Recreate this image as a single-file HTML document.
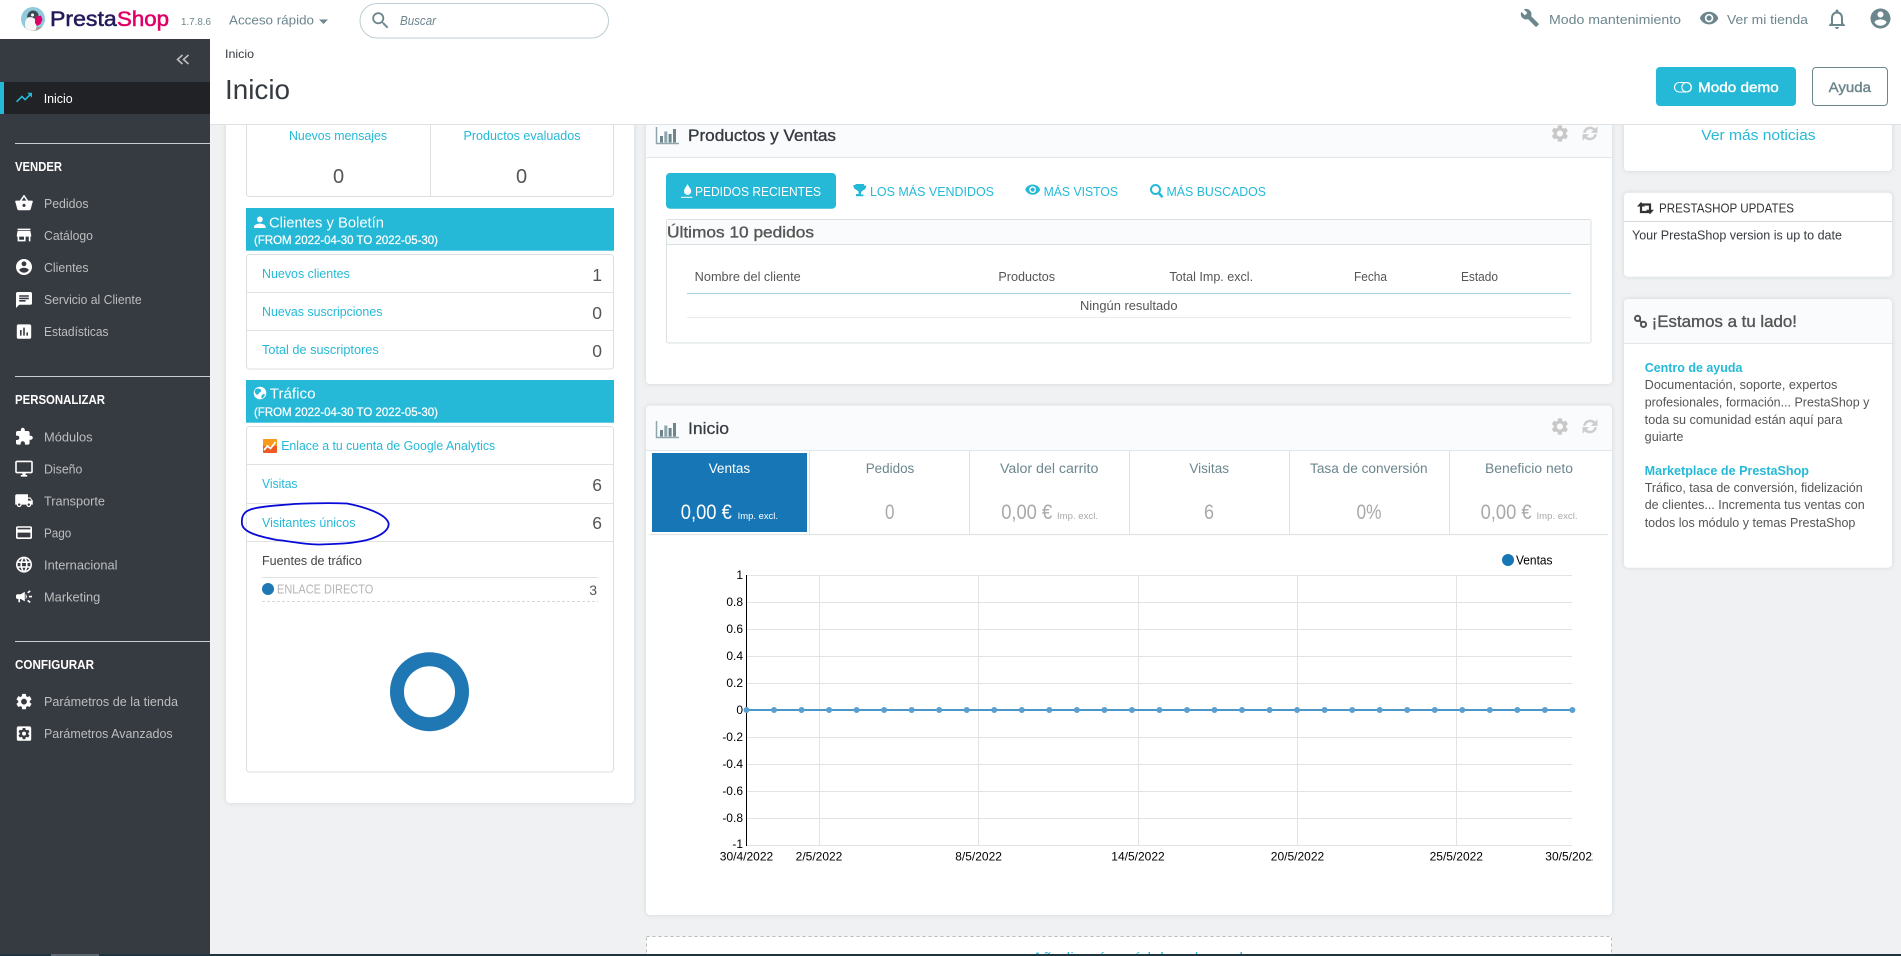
<!DOCTYPE html>
<html lang="es"><head><meta charset="utf-8"><title>PrestaShop - Inicio</title>
<style>
html,body{margin:0;padding:0;background:#eff1f2;width:1901px;height:956px;overflow:hidden}
svg{display:block}
text{font-family:"Liberation Sans",Arial,sans-serif;white-space:pre}
.s{font-size:13px;fill:#bebebe}
.h{font-size:12.5px;font-weight:bold;fill:#fff}
.c{font-size:12.5px;fill:#25b9d7}
.g{font-size:13px;fill:#6c868e}
.v{font-size:17.5px;fill:#555}
.t{font-size:12.5px;fill:#555}
.k{font-size:13.5px;fill:#6c868e}
.b{font-size:21px;fill:#a9a9a9}
.m{font-size:9.5px;fill:#a9a9a9}
.x{font-size:12px;fill:#000}
.card{filter:drop-shadow(0 0 2px rgba(120,140,150,.25))}
.ln{stroke:#dfe1e3;stroke-width:1}
.gr{stroke:#e3e3e3;stroke-width:1}
</style></head><body>
<svg xmlns="http://www.w3.org/2000/svg" width="1901" height="956" viewBox="0 0 1901 956">
<defs>
<path id="basket" d="M17.21 9l-4.38-6.56c-.19-.28-.51-.42-.83-.42-.32 0-.64.14-.83.43L6.79 9H2c-.55 0-1 .45-1 1 0 .09.01.18.04.27l2.54 9.27c.23.84 1 1.46 1.92 1.46h13c.92 0 1.69-.62 1.93-1.46l2.54-9.27L23 10c0-.55-.45-1-1-1h-4.79zM9 9l3-4.4L15 9H9zm3 8c-1.1 0-2-.9-2-2s.9-2 2-2 2 .9 2 2-.9 2-2 2z"/>
<path id="store" d="M20 4H4v2h16V4zm1 10v-2l-1-5H4l-1 5v2h1v6h10v-6h4v6h2v-6h1zm-9 4H6v-4h6v4z"/>
<path id="acct" d="M12 2C6.48 2 2 6.48 2 12s4.48 10 10 10 10-4.48 10-10S17.52 2 12 2zm0 3c1.66 0 3 1.34 3 3s-1.34 3-3 3-3-1.34-3-3 1.34-3 3-3zm0 14.2c-2.5 0-4.71-1.28-6-3.22.03-1.99 4-3.08 6-3.08 1.99 0 5.97 1.09 6 3.08-1.29 1.94-3.5 3.22-6 3.22z"/>
<path id="chat" d="M20 2H4c-1.1 0-1.99.9-1.99 2L2 22l4-4h14c1.1 0 2-.9 2-2V4c0-1.1-.9-2-2-2zM6 9h12v2H6V9zm8 5H6v-2h8v2zm4-6H6V6h12v2z"/>
<path id="assess" d="M19 3H5c-1.1 0-2 .9-2 2v14c0 1.1.9 2 2 2h14c1.1 0 2-.9 2-2V5c0-1.1-.9-2-2-2zM9 17H7v-7h2v7zm4 0h-2V7h2v10zm4 0h-2v-4h2v4z"/>
<path id="ext" d="M20.5 11H19V7c0-1.1-.9-2-2-2h-4V3.5C13 2.12 11.88 1 10.5 1S8 2.12 8 3.5V5H4c-1.1 0-1.99.9-1.99 2v3.8H3.5c1.49 0 2.7 1.21 2.7 2.7s-1.21 2.7-2.7 2.7H2V20c0 1.1.9 2 2 2h3.8v-1.5c0-1.49 1.21-2.7 2.7-2.7 1.49 0 2.7 1.21 2.7 2.7V22H17c1.1 0 2-.9 2-2v-4h1.5c1.38 0 2.5-1.12 2.5-2.5S21.88 11 20.5 11z"/>
<path id="desk" d="M21 2H3c-1.1 0-2 .9-2 2v12c0 1.1.9 2 2 2h7v2H8v2h8v-2h-2v-2h7c1.1 0 2-.9 2-2V4c0-1.1-.9-2-2-2zm0 14H3V4h18v12z"/>
<path id="ship" d="M20 8h-3V4H3c-1.1 0-2 .9-2 2v11h2c0 1.66 1.34 3 3 3s3-1.34 3-3h6c0 1.66 1.34 3 3 3s3-1.34 3-3h2v-5l-3-4zM6 18.5c-.83 0-1.5-.67-1.5-1.5s.67-1.5 1.5-1.5 1.5.67 1.5 1.5-.67 1.5-1.5 1.5zm13.5-9l1.96 2.5H17V9.5h2.5zm-1.5 9c-.83 0-1.5-.67-1.5-1.5s.67-1.5 1.5-1.5 1.5.67 1.5 1.5-.67 1.5-1.5 1.5z"/>
<path id="card" d="M20 4H4c-1.11 0-1.99.89-1.99 2L2 18c0 1.11.89 2 2 2h16c1.11 0 2-.89 2-2V6c0-1.11-.89-2-2-2zm0 14H4v-6h16v6zm0-10H4V6h16v2z"/>
<path id="lang" d="M11.99 2C6.47 2 2 6.48 2 12s4.47 10 9.99 10C17.52 22 22 17.52 22 12S17.52 2 11.99 2zm6.93 6h-2.95c-.32-1.25-.78-2.45-1.38-3.56 1.84.63 3.37 1.91 4.33 3.56zM12 4.04c.83 1.2 1.48 2.53 1.91 3.96h-3.82c.43-1.43 1.08-2.76 1.91-3.96zM4.26 14C4.1 13.36 4 12.69 4 12s.1-1.36.26-2h3.38c-.08.66-.14 1.32-.14 2 0 .68.06 1.34.14 2H4.26zm.82 2h2.95c.32 1.25.78 2.45 1.38 3.56-1.84-.63-3.37-1.9-4.33-3.56zm2.95-8H5.08c.96-1.66 2.49-2.93 4.33-3.56C8.81 5.55 8.35 6.75 8.03 8zM12 19.96c-.83-1.2-1.48-2.53-1.91-3.96h3.82c-.43 1.43-1.08 2.76-1.91 3.96zM14.34 14H9.66c-.09-.66-.16-1.32-.16-2 0-.68.07-1.35.16-2h4.68c.09.65.16 1.32.16 2 0 .68-.07 1.34-.16 2zm.25 5.56c.6-1.11 1.06-2.31 1.38-3.56h2.95c-.96 1.65-2.49 2.93-4.33 3.56zM16.36 14c.08-.66.14-1.32.14-2 0-.68-.06-1.34-.14-2h3.38c.16.64.26 1.31.26 2s-.1 1.36-.26 2h-3.38z"/>
<path id="camp" d="M18 11v2h4v-2h-4zm-2 6.61c.96.71 2.21 1.65 3.2 2.39.4-.53.8-1.07 1.2-1.6-.99-.74-2.24-1.68-3.2-2.4-.4.54-.8 1.08-1.2 1.61zM20.4 5.6c-.4-.53-.8-1.07-1.2-1.6-.99.74-2.24 1.68-3.2 2.4.4.53.8 1.07 1.2 1.6.96-.72 2.21-1.65 3.2-2.4zM4 9c-1.1 0-2 .9-2 2v2c0 1.1.9 2 2 2h1v4h2v-4h1l5 3V6L8 9H4zm11.5 3c0-1.33-.58-2.53-1.5-3.35v6.69c.92-.81 1.5-2.01 1.5-3.34z"/>
<path id="gear" d="M19.14 12.94c.04-.3.06-.61.06-.94 0-.32-.02-.64-.07-.94l2.03-1.58c.18-.14.23-.41.12-.61l-1.92-3.32c-.12-.22-.37-.29-.59-.22l-2.39.96c-.5-.38-1.03-.7-1.62-.94l-.36-2.54c-.04-.24-.24-.41-.48-.41h-3.84c-.24 0-.43.17-.47.41l-.36 2.54c-.59.24-1.13.57-1.62.94l-2.39-.96c-.22-.08-.47 0-.59.22L2.74 8.87c-.12.21-.08.47.12.61l2.03 1.58c-.05.3-.09.63-.09.94s.02.64.07.94l-2.03 1.58c-.18.14-.23.41-.12.61l1.92 3.32c.12.22.37.29.59.22l2.39-.96c.5.38 1.03.7 1.62.94l.36 2.54c.05.24.24.41.48.41h3.84c.24 0 .44-.17.47-.41l.36-2.54c.59-.24 1.13-.56 1.62-.94l2.39.96c.22.08.47 0 .59-.22l1.92-3.32c.12-.22.07-.47-.12-.61l-2.01-1.58zM12 15.6c-1.98 0-3.6-1.62-3.6-3.6s1.62-3.6 3.6-3.6 3.6 1.62 3.6 3.6-1.62 3.6-3.6 3.6z"/>
<path id="gearbox" d="M19 3H5c-1.11 0-2 .9-2 2v14c0 1.1.89 2 2 2h14c1.11 0 2-.9 2-2V5c0-1.1-.89-2-2-2zm-1.75 9c0 .23-.02.46-.05.68l1.48 1.16c.13.11.17.3.08.45l-1.4 2.42c-.09.15-.27.21-.43.15l-1.74-.7c-.36.28-.76.51-1.18.69l-.26 1.85c-.03.17-.18.3-.35.3h-2.8c-.17 0-.32-.13-.35-.29l-.26-1.85c-.43-.18-.82-.41-1.18-.69l-1.74.7c-.16.06-.34 0-.43-.15l-1.4-2.42c-.09-.15-.05-.34.08-.45l1.48-1.16c-.03-.23-.05-.46-.05-.69 0-.23.02-.46.05-.68l-1.48-1.16c-.13-.11-.17-.3-.08-.45l1.4-2.42c.09-.15.27-.21.43-.15l1.74.7c.36-.28.76-.51 1.18-.69l.26-1.85c.03-.17.18-.3.35-.3h2.8c.17 0 .32.13.35.29l.26 1.85c.43.18.82.41 1.18.69l1.74-.7c.16-.06.34 0 .43.15l1.4 2.42c.09.15.05.34-.08.45l-1.48 1.16c.03.23.05.46.05.69z"/>
<path id="trend" d="M16 6l2.29 2.29-4.88 4.88-4-4L2 16.59 3.41 18l6-6 4 4 6.3-6.29L22 12V6z"/>
<path id="wrench" d="M22.7 19l-9.1-9.1c.9-2.3.4-5-1.5-6.9-2-2-5-2.4-7.4-1.3L9 6 6 9 1.6 4.7C.4 7.1.9 10.1 2.9 12.1c1.9 1.9 4.6 2.4 6.9 1.5l9.1 9.1c.4.4 1 .4 1.4 0l2.3-2.3c.5-.4.5-1.1.1-1.4z"/>
<path id="eye" d="M12 4.5C7 4.5 2.73 7.61 1 12c1.73 4.39 6 7.5 11 7.5s9.27-3.11 11-7.5c-1.73-4.39-6-7.5-11-7.5zM12 17c-2.76 0-5-2.24-5-5s2.24-5 5-5 5 2.24 5 5-2.24 5-5 5zm0-8c-1.66 0-3 1.34-3 3s1.34 3 3 3 3-1.34 3-3-1.34-3-3-3z"/>
<path id="bell" d="M12 22c1.1 0 2-.9 2-2h-4c0 1.1.9 2 2 2zm6-6v-5c0-3.07-1.63-5.64-4.5-6.32V4c0-.83-.67-1.5-1.5-1.5s-1.5.67-1.5 1.5v.68C7.64 5.36 6 7.92 6 11v5l-2 2v1h16v-1l-2-2zm-2 1H8v-6c0-2.48 1.51-4.5 4-4.5s4 2.02 4 4.5v6z"/>
<path id="search" d="M15.5 14h-.79l-.28-.27C15.41 12.59 16 11.11 16 9.5 16 5.91 13.09 3 9.5 3S3 5.91 3 9.5 5.91 16 9.5 16c1.61 0 3.09-.59 4.23-1.57l.27.28v.79l5 4.99L20.49 19l-4.99-5zm-6 0C7.01 14 5 11.99 5 9.5S7.01 5 9.5 5 14 7.01 14 9.5 11.99 14 9.5 14z"/>
<path id="person" d="M12 12c2.21 0 4-1.79 4-4s-1.79-4-4-4-4 1.79-4 4 1.79 4 4 4zm0 2c-2.67 0-8 1.34-8 4v2h16v-2c0-2.66-5.33-4-8-4z"/>
<g id="bars"><path d="M.5 0V16.500H23" fill="none" stroke="#8fa4ab" stroke-width="1.500"/><rect x="4" y="9" width="3" height="6.500" fill="#6c868e"/><rect x="8.300" y="4.500" width="3" height="11" fill="#8fa4ab"/><rect x="12.600" y="7" width="3" height="8.500" fill="#6c868e"/><rect x="17" y="2" width="3" height="13.500" fill="#6c868e"/></g>
<g id="ref" fill="#cdcdcd"><path d="M2.300 7.300A5.900 5.900 0 0 1 12.300 4.200" fill="none" stroke="#cdcdcd" stroke-width="2.500"/><path d="M15.500 .7V7.400H8.800z"/><path d="M13.700 8.700A5.900 5.900 0 0 1 3.700 11.800" fill="none" stroke="#cdcdcd" stroke-width="2.500"/><path d="M.5 15.300V8.600H7.200z"/></g>
<clipPath id="xclip"><rect x="1500" y="840" width="93" height="40"/></clipPath>
<clipPath id="logoclip"><circle cx="33" cy="19" r="12"/></clipPath>
</defs>

<rect width="1901" height="956" fill="#eff1f2"/>

<!-- left column card -->
<rect class="card" x="226" y="60" width="408" height="743" rx="4" fill="#fff"/>
<rect x="246.5" y="100" width="367" height="96.5" rx="3" fill="#fff" stroke="#dcdfe1"/>
<path d="M430.5 100V196" class="ln"/>
<text class="c" x="289" y="140" textLength="98" lengthAdjust="spacingAndGlyphs">Nuevos mensajes</text>
<text class="c" x="463.5" y="140" textLength="117" lengthAdjust="spacingAndGlyphs">Productos evaluados</text>
<text class="v" x="333" y="183" style="font-size:20px">0</text>
<text class="v" x="516" y="183" style="font-size:20px">0</text>

<rect x="246" y="208" width="368" height="42.7" fill="#25b9d7"/>
<use href="#person" transform="translate(251.200,213.600) scale(.72)" fill="#fff"/>
<text x="269" y="227.500" style="font-size:15px;fill:#fff" textLength="115" lengthAdjust="spacingAndGlyphs">Clientes y Boletín</text>
<text x="254" y="244" style="font-size:12px;fill:#fff;stroke:#fff;stroke-width:.25" textLength="184" lengthAdjust="spacingAndGlyphs">(FROM 2022-04-30 TO 2022-05-30)</text>

<rect x="246.5" y="254.500" width="367" height="114.500" rx="3" fill="#fff" stroke="#dcdfe1"/>
<path d="M246 292.500H614M246 330.500H614" class="ln"/>
<text class="c" x="262" y="278" textLength="87.800" lengthAdjust="spacingAndGlyphs">Nuevos clientes</text>
<text class="c" x="262" y="316" textLength="120.400" lengthAdjust="spacingAndGlyphs">Nuevas suscripciones</text>
<text class="c" x="262" y="354" textLength="116.700" lengthAdjust="spacingAndGlyphs">Total de suscriptores</text>
<text class="v" x="602" y="281" text-anchor="end">1</text>
<text class="v" x="602" y="319" text-anchor="end">0</text>
<text class="v" x="602" y="357" text-anchor="end">0</text>

<rect x="246" y="380" width="368" height="42.7" fill="#25b9d7"/>
<circle cx="260" cy="393" r="6.300" fill="#fff"/>
<path d="M256 389c2-1 4-.5 5 1s-1 2-2 3-1 3-3 1-1-4 0-5zM262 395c1-1 2-1 3-.5-.5 2-2 3.500-3.500 4 0-1.500-.5-2.500.5-3.500z" fill="#25b9d7"/>
<text x="269.800" y="398.500" style="font-size:15px;fill:#fff" textLength="45.700" lengthAdjust="spacingAndGlyphs">Tráfico</text>
<text x="254" y="416" style="font-size:12px;fill:#fff;stroke:#fff;stroke-width:.25" textLength="184" lengthAdjust="spacingAndGlyphs">(FROM 2022-04-30 TO 2022-05-30)</text>

<rect x="246.500" y="426.500" width="367" height="345.500" rx="3" fill="#fff" stroke="#dcdfe1"/>
<path d="M246 464.500H614M246 503.500H614M246 541.500H614" class="ln"/>
<rect x="263" y="439" width="14" height="14" rx="1" fill="#ef5a23"/>
<rect x="263" y="439" width="14" height="7" rx="1" fill="#f99a1c"/>
<path d="M264 450l3.500-4 3 2.500 5-6.500" fill="none" stroke="#fff" stroke-width="1.800"/>
<text class="c" x="281.200" y="450" textLength="214" lengthAdjust="spacingAndGlyphs">Enlace a tu cuenta de Google Analytics</text>
<text class="c" x="262" y="488" textLength="35.500" lengthAdjust="spacingAndGlyphs">Visitas</text>
<text class="c" x="262" y="527" textLength="93.500" lengthAdjust="spacingAndGlyphs">Visitantes únicos</text>
<text class="v" x="602" y="491" text-anchor="end">6</text>
<text class="v" x="602" y="529" text-anchor="end">6</text>
<path d="M294 504C315 503 335 503 347 503.500C365 507 386 514 388.500 523C390 531 378 537 367 540C350 544 335 544 318 544.500C300 544 290 541 277 540C262 537 243 533 242 524C241 515 245 511 252 509C265 505.500 280 505.500 294 504Z" fill="none" stroke="#0a0ad8" stroke-width="1.800"/>
<text x="262" y="565" style="font-size:12.5px;fill:#444" textLength="100" lengthAdjust="spacingAndGlyphs">Fuentes de tráfico</text>
<path d="M262 577.500H598" class="ln"/>
<circle cx="268" cy="589" r="6" fill="#1f77b4"/>
<text x="277" y="593.500" style="font-size:12.500px;fill:#b5b5b5" textLength="96.300" lengthAdjust="spacingAndGlyphs">ENLACE DIRECTO</text>
<text x="597" y="595" text-anchor="end" style="font-size:14px;fill:#555">3</text>
<path d="M262 601.500H598" stroke="#d8d8d8" stroke-dasharray="3 2" fill="none"/>
<circle cx="429.500" cy="691.700" r="32.500" fill="none" stroke="#1f77b4" stroke-width="14"/>

<!-- Productos y Ventas -->
<rect class="card" x="646" y="60" width="966" height="324" rx="4" fill="#fff"/>
<rect x="646" y="60" width="966" height="97" rx="4" fill="#fafbfc"/>
<path d="M646 157.500H1612" stroke="#dfe7ea"/>
<use href="#bars" transform="translate(656,127)"/>
<text x="688" y="141" style="font-size:16.500px;fill:#363a41;stroke:#363a41;stroke-width:.35" textLength="148" lengthAdjust="spacingAndGlyphs">Productos y Ventas</text>
<use href="#gear" transform="translate(1549.700,123.300) scale(.85)" fill="#c8c8c8"/>
<use href="#ref" transform="translate(1582,125.500)"/>

<rect x="666" y="173" width="170" height="35.700" rx="4" fill="#25b9d7"/>
<path d="M687.500 184c-.8 2.500-3.500 4.500-3.500 7.300a3.600 3.600 0 0 0 7.200 0c0-2.800-2.900-4.800-3.700-7.300z" fill="#fff"/>
<path d="M681 197.300H692.500" stroke="#fff" stroke-width="1"/>
<text x="695" y="196" style="font-size:13px;fill:#fff" textLength="126" lengthAdjust="spacingAndGlyphs">PEDIDOS RECIENTES</text>
<path d="M855.500 184h8.500v1.500h2.200c0 3-1.500 4.500-3.500 5-.5.800-1 1.300-1.700 1.500v2.500h2.500v1.700h-7.500V194h2.500v-2.500c-.7-.2-1.200-.7-1.700-1.500-2-.5-3.500-2-3.500-5h2.200z" fill="#25b9d7"/>
<text class="c" x="870" y="196" style="font-size:13px" textLength="124" lengthAdjust="spacingAndGlyphs">LOS MÁS VENDIDOS</text>
<use href="#eye" transform="translate(1024.500,181.500) scale(.68)" fill="#25b9d7"/>
<text class="c" x="1043.600" y="196" style="font-size:13px" textLength="74.400" lengthAdjust="spacingAndGlyphs">MÁS VISTOS</text>
<circle cx="1155.500" cy="189.500" r="4.500" fill="none" stroke="#25b9d7" stroke-width="2"/>
<path d="M1158.800 193l3.700 4.200" stroke="#25b9d7" stroke-width="2.500"/>
<text class="c" x="1166.500" y="196" style="font-size:13px" textLength="99.500" lengthAdjust="spacingAndGlyphs">MÁS BUSCADOS</text>

<rect x="666.500" y="219.500" width="924.500" height="123.500" rx="2" fill="#fff" stroke="#dbe0e3"/>
<rect x="667" y="220" width="923.500" height="24" fill="#fafbfc"/>
<path d="M666 244.500H1591" stroke="#dbe0e3"/>
<text x="667" y="237.500" style="font-size:15.500px;fill:#555;stroke:#555;stroke-width:.35" textLength="147" lengthAdjust="spacingAndGlyphs">Últimos 10 pedidos</text>
<text class="t" x="694.700" y="281" textLength="106" lengthAdjust="spacingAndGlyphs">Nombre del cliente</text>
<text class="t" x="998.400" y="281" textLength="56.700" lengthAdjust="spacingAndGlyphs">Productos</text>
<text class="t" x="1169.400" y="281" textLength="83.700" lengthAdjust="spacingAndGlyphs">Total Imp. excl.</text>
<text class="t" x="1354" y="281" textLength="33" lengthAdjust="spacingAndGlyphs">Fecha</text>
<text class="t" x="1461" y="281" textLength="37" lengthAdjust="spacingAndGlyphs">Estado</text>
<path d="M687 293.500H1571" stroke="#a7d2e4"/>
<text class="t" x="1080" y="310" textLength="97.500" lengthAdjust="spacingAndGlyphs">Ningún resultado</text>
<path d="M687 317.500H1571" stroke="#eaeaea"/>

<!-- Inicio card -->
<rect class="card" x="646" y="405.700" width="966" height="509.300" rx="4" fill="#fff"/>
<path d="M646 450V409.700a4 4 0 0 1 4-4H1608a4 4 0 0 1 4 4V450z" fill="#fafbfc"/>
<path d="M646 450.500H1612" stroke="#dfe7ea"/>
<use href="#bars" transform="translate(656,421)"/>
<text x="688" y="434" style="font-size:16.500px;fill:#363a41;stroke:#363a41;stroke-width:.25" textLength="41" lengthAdjust="spacingAndGlyphs">Inicio</text>
<use href="#gear" transform="translate(1549.700,416.300) scale(.85)" fill="#c8c8c8"/>
<use href="#ref" transform="translate(1582,418.500)"/>

<rect x="652" y="453" width="155" height="79" fill="#1777b6"/>
<path d="M809.500 451V534M969.500 451V534M1129.500 451V534M1289.500 451V534M1449.500 451V534" stroke="#dfe1e3"/>
<path d="M650 534.500H1608" stroke="#dfe1e3" stroke-width="1.200"/>
<text x="708.600" y="473" style="font-size:13.500px;fill:#fff" textLength="41.600" lengthAdjust="spacingAndGlyphs">Ventas</text>
<text class="k" x="865.700" y="473" textLength="48.600" lengthAdjust="spacingAndGlyphs">Pedidos</text>
<text class="k" x="1000" y="473" textLength="98.400" lengthAdjust="spacingAndGlyphs">Valor del carrito</text>
<text class="k" x="1189.400" y="473" textLength="39.600" lengthAdjust="spacingAndGlyphs">Visitas</text>
<text class="k" x="1310" y="473" textLength="117.600" lengthAdjust="spacingAndGlyphs">Tasa de conversión</text>
<text class="k" x="1485" y="473" textLength="88" lengthAdjust="spacingAndGlyphs">Beneficio neto</text>
<text x="680.800" y="519" style="font-size:21px;fill:#fff" textLength="51" lengthAdjust="spacingAndGlyphs">0,00 €</text>
<text x="737.600" y="519" style="font-size:9.500px;fill:#fff" textLength="40.400" lengthAdjust="spacingAndGlyphs">Imp. excl.</text>
<text class="b" x="885" y="519" textLength="9.500" lengthAdjust="spacingAndGlyphs">0</text>
<text class="b" x="1001.200" y="519" textLength="51" lengthAdjust="spacingAndGlyphs">0,00 €</text>
<text class="m" x="1057" y="519" textLength="41" lengthAdjust="spacingAndGlyphs">Imp. excl.</text>
<text class="b" x="1204" y="519" textLength="10" lengthAdjust="spacingAndGlyphs">6</text>
<text class="b" x="1356.500" y="519" textLength="25" lengthAdjust="spacingAndGlyphs">0%</text>
<text class="b" x="1480.600" y="519" textLength="51" lengthAdjust="spacingAndGlyphs">0,00 €</text>
<text class="m" x="1536.500" y="519" textLength="41" lengthAdjust="spacingAndGlyphs">Imp. excl.</text>

<!-- chart -->
<circle cx="1508" cy="560" r="6" fill="#1777b6"/>
<text x="1516" y="564.500" style="font-size:12.500px;fill:#000" textLength="36.500" lengthAdjust="spacingAndGlyphs">Ventas</text>
<path class="gr" d="M746.500 575.500H1572M746.500 602.500H1572M746.500 629.500H1572M746.500 656.500H1572M746.500 683.500H1572M746.500 737.500H1572M746.500 764.500H1572M746.500 791.500H1572M746.500 818.500H1572M746.500 845.500H1572"/>
<path class="gr" d="M819.500 575V845M978.500 575V845M1138.500 575V845M1297.500 575V845M1456.500 575V845"/>
<path d="M746.500 575V846" stroke="#000" stroke-width="1"/>
<path d="M746.500 710H1572" stroke="#4a96c9" stroke-width="2"/>
<path d="M746.500 710H1575" stroke="#5a9fcf" stroke-width="6" stroke-linecap="round" stroke-dasharray="0 27.530"/>
<text class="x" x="743" y="579" text-anchor="end">1</text>
<text class="x" x="743" y="606" text-anchor="end">0.8</text>
<text class="x" x="743" y="633" text-anchor="end">0.6</text>
<text class="x" x="743" y="660" text-anchor="end">0.4</text>
<text class="x" x="743" y="687" text-anchor="end">0.2</text>
<text class="x" x="743" y="714" text-anchor="end">0</text>
<text class="x" x="743" y="741" text-anchor="end">-0.2</text>
<text class="x" x="743" y="768" text-anchor="end">-0.4</text>
<text class="x" x="743" y="795" text-anchor="end">-0.6</text>
<text class="x" x="743" y="822" text-anchor="end">-0.8</text>
<text class="x" x="743" y="848" text-anchor="end">-1</text>
<text class="x" x="746.500" y="860.500" text-anchor="middle">30/4/2022</text>
<text class="x" x="819" y="860.500" text-anchor="middle">2/5/2022</text>
<text class="x" x="978.600" y="860.500" text-anchor="middle">8/5/2022</text>
<text class="x" x="1138" y="860.500" text-anchor="middle">14/5/2022</text>
<text class="x" x="1297.500" y="860.500" text-anchor="middle">20/5/2022</text>
<text class="x" x="1456.300" y="860.500" text-anchor="middle">25/5/2022</text>
<text class="x" x="1572" y="860.500" text-anchor="middle" clip-path="url(#xclip)">30/5/2022</text>

<!-- dashed box -->
<rect x="646.500" y="936.500" width="965" height="30" fill="#fff" stroke="#bbb" stroke-dasharray="3 3"/>
<text class="c" x="1032" y="962" style="font-size:14px" textLength="211" lengthAdjust="spacingAndGlyphs">Añadir más módulos al panel</text>

<!-- right column -->
<rect class="card" x="1624" y="60" width="268" height="111" rx="4" fill="#fff"/>
<text x="1701.300" y="140" style="font-size:15px;fill:#25b9d7" textLength="114.300" lengthAdjust="spacingAndGlyphs">Ver más noticias</text>

<rect class="card" x="1624" y="192.700" width="268" height="84" rx="4" fill="#fff"/>
<path d="M1624 221.500H1892" stroke="#d5d9db"/>
<path d="M1637 206.500l4-4.500 4 4.500zM1646 209.800l4 4.500 4-4.500z" fill="#333"/>
<path d="M1641 206v6h8M1650 210.500v-6h-8" fill="none" stroke="#333" stroke-width="2.200"/>
<text x="1659" y="212.500" style="font-size:13px;fill:#333" textLength="135" lengthAdjust="spacingAndGlyphs">PRESTASHOP UPDATES</text>
<text x="1632" y="239.500" style="font-size:12.500px;fill:#363a41" textLength="210" lengthAdjust="spacingAndGlyphs">Your PrestaShop version is up to date</text>

<rect class="card" x="1624" y="299" width="268" height="268.700" rx="4" fill="#fff"/>
<path d="M1624 343V303a4 4 0 0 1 4-4H1888a4 4 0 0 1 4 4V343z" fill="#fafbfc"/>
<path d="M1624 343.500H1892" stroke="#dfe7ea"/>
<circle cx="1637.600" cy="318.400" r="2.600" fill="none" stroke="#555" stroke-width="2"/>
<circle cx="1643.500" cy="324.400" r="2.600" fill="none" stroke="#555" stroke-width="2"/>
<path d="M1639 320l3 3" stroke="#555" stroke-width="2"/>
<text x="1651.700" y="327" style="font-size:16.500px;fill:#555;stroke:#555;stroke-width:.35" textLength="145.300" lengthAdjust="spacingAndGlyphs">¡Estamos a tu lado!</text>
<text x="1644.700" y="372" style="font-size:12.500px;font-weight:bold;fill:#25b9d7" textLength="97.700" lengthAdjust="spacingAndGlyphs">Centro de ayuda</text>
<text class="t" x="1644.700" y="389" textLength="192.700" lengthAdjust="spacingAndGlyphs">Documentación, soporte, expertos</text>
<text class="t" x="1644.700" y="406.500" textLength="224.700" lengthAdjust="spacingAndGlyphs">profesionales, formación... PrestaShop y</text>
<text class="t" x="1644.700" y="424" textLength="197.700" lengthAdjust="spacingAndGlyphs">toda su comunidad están aquí para</text>
<text class="t" x="1644.700" y="441" textLength="38.700" lengthAdjust="spacingAndGlyphs">guiarte</text>
<text x="1644.700" y="475" style="font-size:12.500px;font-weight:bold;fill:#25b9d7" textLength="164.300" lengthAdjust="spacingAndGlyphs">Marketplace de PrestaShop</text>
<text class="t" x="1644.700" y="492" textLength="218" lengthAdjust="spacingAndGlyphs">Tráfico, tasa de conversión, fidelización</text>
<text class="t" x="1644.700" y="509" textLength="220" lengthAdjust="spacingAndGlyphs">de clientes... Incrementa tus ventas con</text>
<text class="t" x="1644.700" y="527" textLength="210.700" lengthAdjust="spacingAndGlyphs">todos los módulo y temas PrestaShop</text>

<!-- header -->
<rect x="0" y="0" width="1901" height="39" fill="#fff"/>
<rect x="210" y="39" width="1691" height="85" fill="#fff"/>
<path d="M210 124.500H1901" stroke="#dfe1e2"/>

<g clip-path="url(#logoclip)">
<rect x="21" y="7" width="24" height="24" fill="#8fcbdc"/>
<rect x="21" y="27" width="24" height="4" fill="#a9a49a"/>
<path d="M27 19c-.5-5 2.500-8.500 6-8.500s6 2.500 5.500 6l-2 3.500z" fill="#3f4b54"/>
<path d="M26 30c-1.500-5-1.500-9 1.500-12.500 3.500-1 7 0 8.500 3 1 3.500.5 7-.5 9.500-3 1-6.500 1-9.500 0z" fill="#f6f6f6"/>
<path d="M35 17l6-1.500 1.500 4-2 4.500-3.500 2-2-3z" fill="#df0067"/>
<circle cx="32.500" cy="15" r="1.500" fill="#fff"/>
</g>
<text x="50" y="26" style="font-size:21px;fill:#251b5b;stroke:#251b5b;stroke-width:.55" textLength="66.700" lengthAdjust="spacingAndGlyphs">Presta</text>
<text x="117" y="26" style="font-size:21px;fill:#df0067;stroke:#df0067;stroke-width:.55" textLength="52" lengthAdjust="spacingAndGlyphs">Shop</text>
<text x="181" y="25" style="font-size:10.500px;fill:#6c868e" textLength="30" lengthAdjust="spacingAndGlyphs">1.7.8.6</text>
<text class="g" x="229" y="24.500" textLength="85" lengthAdjust="spacingAndGlyphs">Acceso rápido</text>
<path d="M319 19.500h9l-4.500 4.500z" fill="#6c868e"/>
<rect x="360" y="3.500" width="248.500" height="34.500" rx="17.200" fill="#fff" stroke="#bbcdd2"/>
<use href="#search" transform="translate(369.500,9.500) scale(.92)" fill="#6c868e"/>
<text x="400" y="25" style="font-size:12.500px;font-style:italic;fill:#6c868e" textLength="36" lengthAdjust="spacingAndGlyphs">Buscar</text>
<use href="#wrench" transform="translate(1520,8) scale(.82)" fill="#6c868e"/>
<text class="g" x="1549" y="24" textLength="132" lengthAdjust="spacingAndGlyphs">Modo mantenimiento</text>
<use href="#eye" transform="translate(1699,8) scale(.84)" fill="#6c868e"/>
<text class="g" x="1727" y="24" textLength="81" lengthAdjust="spacingAndGlyphs">Ver mi tienda</text>
<use href="#bell" transform="translate(1825,7) scale(1)" fill="#6c868e"/>
<use href="#acct" transform="translate(1868.500,6.500) scale(1)" fill="#6c868e"/>

<text x="225" y="58" style="font-size:12px;fill:#363a41" textLength="29" lengthAdjust="spacingAndGlyphs">Inicio</text>
<text x="225" y="99" style="font-size:28px;fill:#363a41" textLength="65" lengthAdjust="spacingAndGlyphs">Inicio</text>

<rect x="1656" y="67" width="140" height="39" rx="4" fill="#25b9d7"/>
<rect x="1674.500" y="82.500" width="17" height="9.500" rx="4.750" fill="none" stroke="#fff" stroke-width="1.100"/>
<circle cx="1686.500" cy="87.250" r="4.700" fill="none" stroke="#fff" stroke-width="1.100"/>
<text x="1698" y="92" style="font-size:14px;fill:#fff;stroke:#fff;stroke-width:.4" textLength="80.700" lengthAdjust="spacingAndGlyphs">Modo demo</text>
<rect x="1812.500" y="67.500" width="75" height="38" rx="3.500" fill="#fff" stroke="#6c868e"/>
<text x="1828.700" y="92" style="font-size:14px;fill:#6c868e;stroke:#6c868e;stroke-width:.4" textLength="42.300" lengthAdjust="spacingAndGlyphs">Ayuda</text>

<!-- sidebar -->
<rect x="0" y="39" width="210" height="917" fill="#363a41"/>
<path d="M182.500 55l-5 4.500 5 4.500M188.500 55l-5 4.500 5 4.500" fill="none" stroke="#bebebe" stroke-width="1.600"/>
<rect x="0" y="82" width="210" height="32" fill="#202226"/>
<rect x="0" y="82" width="4" height="32" fill="#25b9d7"/>
<use href="#trend" transform="translate(14.400,88) scale(.8)" fill="#25b9d7"/>
<text x="43.700" y="103" style="font-size:13px;fill:#fff" textLength="29" lengthAdjust="spacingAndGlyphs">Inicio</text>
<path d="M15 143.500H210M15 376.500H210M15 641.500H210" stroke="#c3cfd3"/>
<text class="h" x="15" y="171" textLength="47" lengthAdjust="spacingAndGlyphs">VENDER</text>
<text class="h" x="15" y="404" textLength="90" lengthAdjust="spacingAndGlyphs">PERSONALIZAR</text>
<text class="h" x="15" y="669" textLength="79" lengthAdjust="spacingAndGlyphs">CONFIGURAR</text>
<g fill="#fff">
<use href="#basket" transform="translate(14.400,193.400) scale(.8)"/>
<use href="#store" transform="translate(14.400,225.400) scale(.8)"/>
<use href="#acct" transform="translate(14.400,257.400) scale(.8)"/>
<use href="#chat" transform="translate(14.400,290.400) scale(.8)"/>
<use href="#assess" transform="translate(14.400,322) scale(.8)"/>
<use href="#ext" transform="translate(14.400,427) scale(.8)"/>
<use href="#desk" transform="translate(14.400,459) scale(.8)"/>
<use href="#ship" transform="translate(14.400,491) scale(.8)"/>
<use href="#card" transform="translate(14.400,523) scale(.8)"/>
<use href="#lang" transform="translate(14.400,555) scale(.8)"/>
<use href="#camp" transform="translate(14.400,587) scale(.8)"/>
<use href="#gear" transform="translate(14.400,692) scale(.8)"/>
<use href="#gearbox" transform="translate(14.400,724) scale(.8)"/>
</g>
<circle cx="24" cy="733.600" r="2" fill="#fff"/>
<text class="s" x="44" y="208" textLength="44.500" lengthAdjust="spacingAndGlyphs">Pedidos</text>
<text class="s" x="44" y="240" textLength="49" lengthAdjust="spacingAndGlyphs">Catálogo</text>
<text class="s" x="44" y="272" textLength="44.500" lengthAdjust="spacingAndGlyphs">Clientes</text>
<text class="s" x="44" y="304" textLength="97.600" lengthAdjust="spacingAndGlyphs">Servicio al Cliente</text>
<text class="s" x="44" y="336" textLength="64.500" lengthAdjust="spacingAndGlyphs">Estadísticas</text>
<text class="s" x="44" y="441.500" textLength="48.600" lengthAdjust="spacingAndGlyphs">Módulos</text>
<text class="s" x="44" y="473.500" textLength="38.400" lengthAdjust="spacingAndGlyphs">Diseño</text>
<text class="s" x="44" y="505.500" textLength="61" lengthAdjust="spacingAndGlyphs">Transporte</text>
<text class="s" x="44" y="537.500" textLength="27.300" lengthAdjust="spacingAndGlyphs">Pago</text>
<text class="s" x="44" y="569.500" textLength="73.500" lengthAdjust="spacingAndGlyphs">Internacional</text>
<text class="s" x="44" y="601.500" textLength="56.300" lengthAdjust="spacingAndGlyphs">Marketing</text>
<text class="s" x="44" y="706" textLength="134" lengthAdjust="spacingAndGlyphs">Parámetros de la tienda</text>
<text class="s" x="44" y="738" textLength="128.600" lengthAdjust="spacingAndGlyphs">Parámetros Avanzados</text>

<!-- bottom strip -->
<rect x="0" y="954" width="1901" height="2" fill="#1e3540"/>
<rect x="51" y="954" width="48" height="2" fill="#5a6670"/>
</svg>
</body></html>
